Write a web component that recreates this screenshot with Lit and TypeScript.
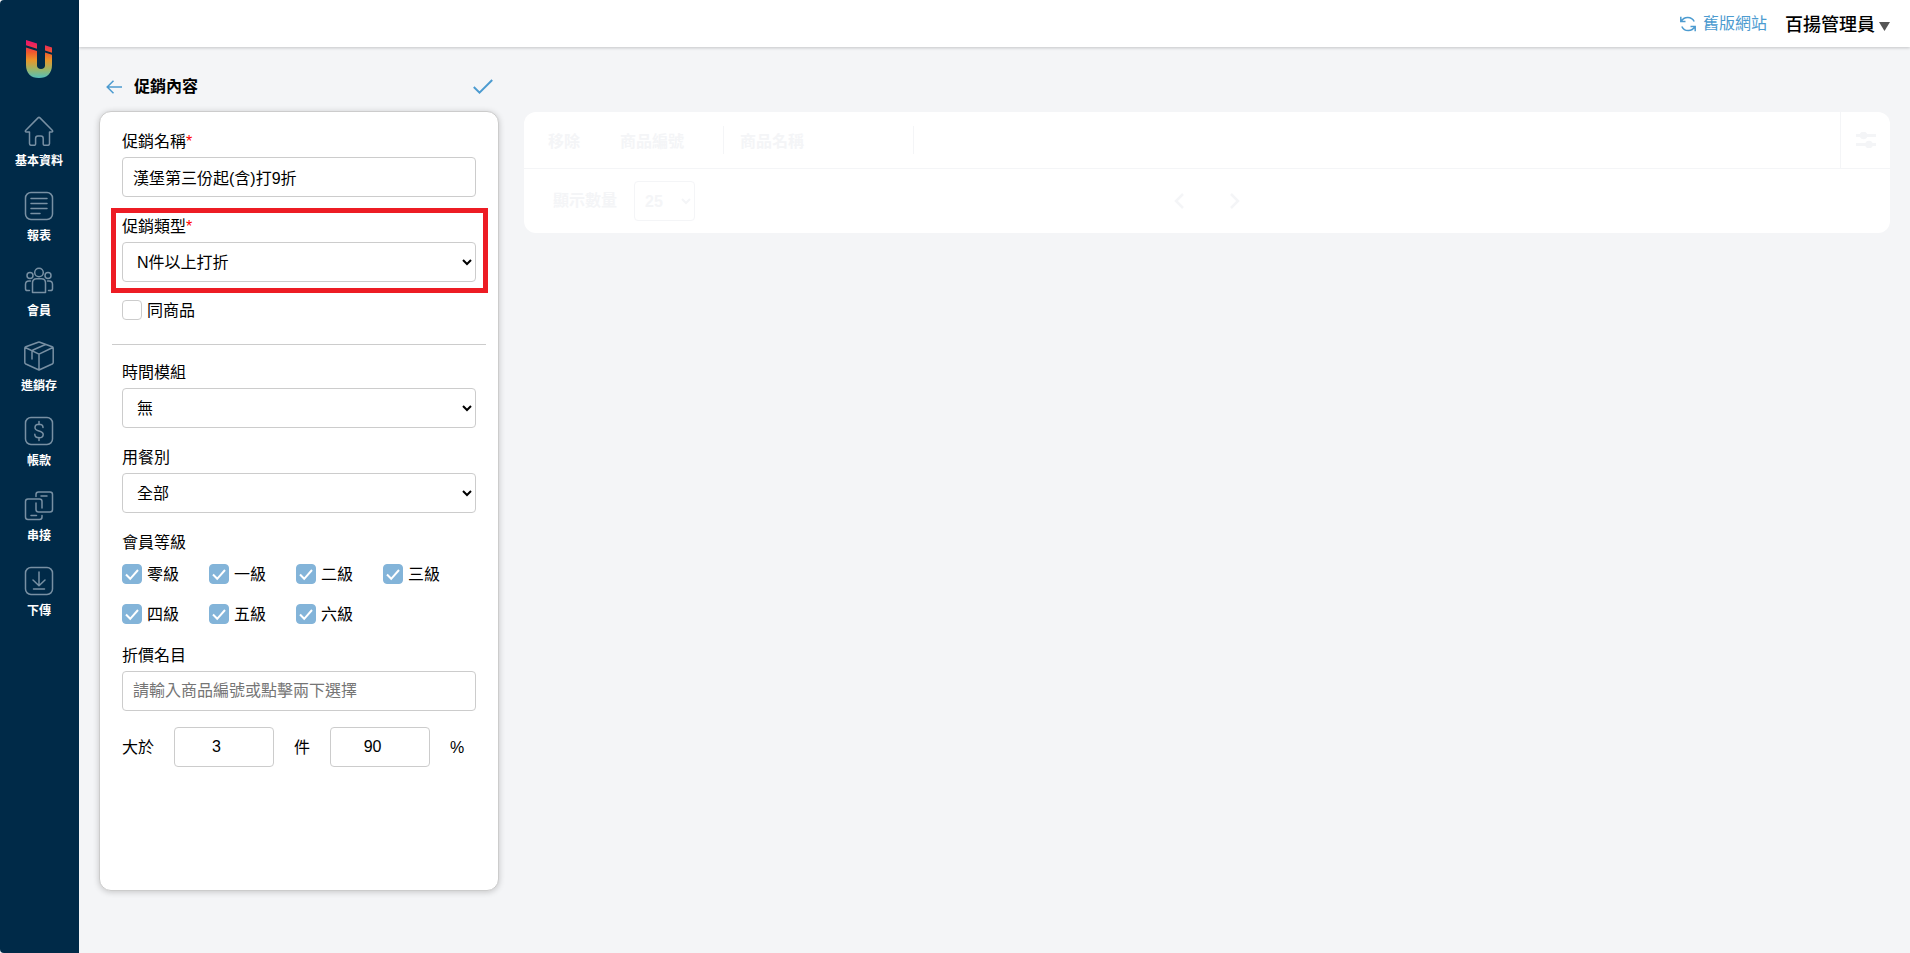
import { LitElement, html, css, svg } from "lit";
import { customElement } from "lit/decorators.js";

const shared = css`
  *, *::before, *::after { box-sizing: border-box; }
  button, input, select { font: inherit; color: inherit; }
  button { border: 0; padding: 0; background: none; cursor: pointer; display: flex; align-items: center; }
`;

const navItems = [
  { label: "基本資料", icon: svg`<path d="M5.500 16H2.600c-1.400 0-1.600-1-.8-1.800L14 1.900c.6-.6 1.400-.6 2 0l12.200 12.300c.8.8.6 1.800-.8 1.800h-1.900v11.500c0 1.200-.6 1.800-1.800 1.800h-3.200c-.9 0-1.300-.5-1.300-1.300v-5.500c0-1.600-.8-2.400-2.200-2.400h-3.200c-1.400 0-2.200.8-2.200 2.400V28c0 .8-.4 1.300-1.300 1.300H7.300c-1.200 0-1.800-.6-1.800-1.800z"/>` },
  { label: "報表", icon: svg`<rect x="1.500" y="1.500" width="27" height="27" rx="5.500"/><path d="M7 7.500h16M7 12.500h16M7 17.500h16M7 22.500h9"/>` },
  { label: "會員", icon: svg`<circle cx="15" cy="6.500" r="4.300"/><circle cx="6" cy="9.500" r="3"/><circle cx="24" cy="9.500" r="3"/><path d="M8.500 26.500V17c0-2.800 1.400-4.200 4.200-4.200h4.600c2.800 0 4.200 1.400 4.200 4.200v9.500zM6.500 15H5c-2.300 0-3.500 1.200-3.500 3.500v4.200c0 1.200.6 1.800 1.800 1.800h2.200M23.500 15H25c2.300 0 3.500 1.200 3.500 3.500v4.200c0 1.200-.6 1.800-1.800 1.800h-2.200"/>` },
  { label: "進銷存", icon: svg`<path d="M14.200 1.200 1.800 5.700q-1 .4-1 1.500v14.300q0 1 1 1.500L15 29l13.200-6q1-.5 1-1.500V7.200q0-1.100-1-1.500L15.800 1.200q-.8-.3-1.600 0zM1.200 6.500 15 13.200l13.800-6.700M15 13.200V29M8 18v-7.500q0-1 1-1.500l12.500-5.500"/>` },
  { label: "帳款", icon: svg`<rect x="1.500" y="1.500" width="27" height="27" rx="5.500"/><path d="M15 5.500v3M15 21.500v3M19 11.500c0-2-1.700-3.200-4-3.200s-4 1.200-4 3.200 1.500 2.900 4 3.500 4.200 1.400 4.200 3.500-1.800 3.300-4.200 3.300-4.200-1.300-4.200-3.500"/>` },
  { label: "串接", icon: svg`<path d="M12 5.500v-2q0-2.500 2.500-2.500H26q2.500 0 2.500 2.500v15q0 2.500-2.500 2.500h-11.500q-2.500 0-2.500-2.500V12M17 5h6M18 17V10.500Q18 8 15.500 8H4Q1.500 8 1.500 10.500v15.500Q1.500 28.500 4 28.500h11.500q2.500 0 2.500-2.500v-1.500M7 24.500h5.500"/>` },
  { label: "下傳", icon: svg`<rect x="1.500" y="1.500" width="27" height="27" rx="5.500"/><path d="M15 6v13.500M9 14l6 5.700 6-5.700M9.500 23h11"/>` },
];

@customElement("side-nav")
class SideNav extends LitElement {
  static styles = [shared, css`
    :host { display: block; background: #002a48; color: #fff; padding-right: 1px; }
    .logo { display: flex; justify-content: center; padding: 40px 0 37px; }
    nav { display: flex; flex-direction: column; }
    a { height: 75px; display: flex; flex-direction: column; align-items: center; gap: 6px; color: inherit; text-decoration: none; font-size: 12px; line-height: 18px; font-weight: 700; }
    .icon { fill: none; stroke: #7890a3; stroke-width: 1.500; stroke-linecap: round; stroke-linejoin: round; }
  `];
  render() {
    return html`
      <div class="logo">
        <svg width="26" height="39" viewBox="0 0 26 39" aria-hidden="true">
          <defs><linearGradient id="g" x1="0" y1="0" x2="0" y2="39" gradientUnits="userSpaceOnUse">
            <stop offset=".08" stop-color="#ec1c64"/><stop offset=".32" stop-color="#ee5a2d"/>
            <stop offset=".52" stop-color="#e8962a"/><stop offset=".75" stop-color="#9cb567"/><stop offset="1" stop-color="#4bbfc4"/>
          </linearGradient></defs>
          <path fill="url(#g)" d="M0 0l11 3.500v5.300L0 5.300zM19 5.200l7 2.200v5.300l-7-2.200zM0 7.500l11 3.500v14.500c0 2.300 1.500 3.500 4 3.500s4-1.200 4-3.500V12.600l7 2.200V25c0 8.500-5 13-13 13S0 33.500 0 25z"/>
        </svg>
      </div>
      <nav>
        ${navItems.map((n) => html`<a href="#"><svg class="icon" width="30" height="30" viewBox="0 0 30 30" aria-hidden="true">${n.icon}</svg><span>${n.label}</span></a>`)}
      </nav>`;
  }
}

@customElement("top-bar")
class TopBar extends LitElement {
  static styles = [shared, css`
    :host { display: flex; justify-content: flex-end; align-items: center; gap: 18px; height: 47px; padding: 0 20px; background: #fff; box-shadow: 0 1px 3px rgba(0, 0, 0, .2); }
    a { display: flex; align-items: center; gap: 7px; color: #4c9bd0; text-decoration: none; font-size: 16px; line-height: 24px; }
    .user { gap: 4px; padding-top: 2px; font-size: 18px; line-height: 24px; font-weight: 500; color: #000; }
    .caret { margin-top: 4px; }
  `];
  render() {
    return html`
      <a href="#">
        <svg width="16" height="16" viewBox="0 0 16 16" fill="none" stroke="currentColor" stroke-width="1.500" aria-hidden="true">
          <path d="M.8.800v4.700h4.700M15.200 15.200v-4.700h-4.700M1.200 5.300C3.800.4 11.500-.2 14.200 5.500M14.800 10.700C12.200 15.600 4.500 16.200 1.800 10.500"/>
        </svg>舊版網站</a>
      <button class="user" type="button">百揚管理員
        <svg class="caret" width="11" height="9" viewBox="0 0 11 9" aria-hidden="true"><path d="M0 0h11L5.500 9z" fill="#555"/></svg>
      </button>`;
  }
}

@customElement("promo-form")
class PromoForm extends LitElement {
  static styles = [shared, css`
    :host { display: flex; flex-direction: column; width: 400px; font-size: 16px; line-height: 27px; }
    .head { display: flex; align-items: center; height: 49px; padding: 0 6px 0 7px; }
    h1 { flex: 1; margin: 0 0 0 12px; font-size: 16px; font-weight: 700; }
    .head button { color: #4c9bd0; }
    form { flex: 1; padding: 16px 22px; background: #fff; border: 1px solid #ccc; border-radius: 12px; box-shadow: 0 1px 6px rgba(0, 0, 0, .2); display: flex; flex-direction: column; gap: 16px; }
    .field { display: flex; flex-direction: column; gap: 2px; position: relative; }
    .marked::after { content: ""; position: absolute; inset: -5px -12px -11px -11px; border: 5px solid #ed1c24; pointer-events: none; }
    .req { color: #f00; }
    .box { width: 100%; height: 40px; border: 1px solid #ccc; border-radius: 4px; background: #fff; padding: 0 10px; outline: 0; }
    .box::placeholder { color: #757575; }
    .num { width: 100px; text-align: center; }
    .check { display: flex; align-items: center; gap: 5px; line-height: 26px; }
    .check input { appearance: none; width: 20px; height: 20px; margin: 0 0 2px; border: 1px solid #ccc; border-radius: 4px; background: #fff; }
    .check input:checked { border-color: #83b4d9; background: #83b4d9 url("data:image/svg+xml,%3Csvg xmlns='http://www.w3.org/2000/svg' viewBox='0 0 20 20'%3E%3Cpath d='M4 10.500l4.200 4.300L16 6' fill='none' stroke='white' stroke-width='2'/%3E%3C/svg%3E") center / 20px 20px; }
    hr { width: calc(100% + 20px); margin: 4px -10px -2px; border: 0; border-top: 1px solid #ccc; }
    fieldset { border: 0; margin: 0 0 -2px; padding: 0; min-width: 0; }
    legend { padding: 0; margin-bottom: 6px; }
    .levels { display: grid; grid-template-columns: repeat(4, 87px); row-gap: 14px; }
    .rule { display: flex; align-items: center; gap: 20px; }
  `];
  render() {
    const levels = ["零級", "一級", "二級", "三級", "四級", "五級", "六級"];
    return html`
      <div class="head">
        <button type="button" aria-label="返回"><svg width="16" height="14" viewBox="0 0 16 14" fill="none" stroke="currentColor" stroke-width="1.500"><path d="M7.500.8L1.200 7l6.300 6.200M1.200 7H16"/></svg></button>
        <h1>促銷內容</h1>
        <button type="button" aria-label="儲存"><svg width="20" height="16" viewBox="0 0 20 16" fill="none" stroke="currentColor" stroke-width="2"><path d="M.8 8l5.700 5.700L19.200 1"/></svg></button>
      </div>
      <form>
        <div class="field"><label for="name">促銷名稱<span class="req">*</span></label><input class="box" id="name" type="text" value="漢堡第三份起(含)打9折" /></div>
        <div class="field marked"><label for="type">促銷類型<span class="req">*</span></label><select class="box" id="type"><option>N件以上打折</option></select></div>
        <label class="check"><input type="checkbox" />同商品</label>
        <hr />
        <div class="field"><label for="time">時間模組</label><select class="box" id="time"><option>無</option></select></div>
        <div class="field"><label for="dining">用餐別</label><select class="box" id="dining"><option>全部</option></select></div>
        <fieldset><legend>會員等級</legend>
          <div class="levels">${levels.map((l) => html`<label class="check"><input type="checkbox" checked />${l}</label>`)}</div>
        </fieldset>
        <div class="field"><label for="item">折價名目</label><input class="box" id="item" type="text" placeholder="請輸入商品編號或點擊兩下選擇" /></div>
        <div class="rule">
          <label for="qty">大於</label><input class="box num" id="qty" type="number" value="3" />
          <label for="pct">件</label><input class="box num" id="pct" type="number" value="90" /><span>%</span>
        </div>
      </form>`;
  }
}

@customElement("product-list")
class ProductList extends LitElement {
  static styles = [shared, css`
    :host { display: block; background: #fff; border-radius: 12px; color: #f4f5f7; font-size: 16px; line-height: 24px; font-weight: 700; }
    table { width: 100%; border-collapse: separate; border-spacing: 0; table-layout: fixed; }
    th { height: 57px; padding: 0; text-align: left; border-bottom: 1px solid #f4f5f7; }
    .remove { width: 80px; padding-left: 24px; }
    .code { width: 120px; padding-left: 16px; }
    .title { width: 190px; padding-left: 16px; }
    .cell { display: block; height: 28px; line-height: 32px; }
    .bar { border-right: 1px solid #f4f5f7; }
    .tools { width: 50px; border-left: 1px solid #f4f5f7; }
    .tools button { margin: 0 auto; }
    .foot { display: grid; grid-template-columns: 1fr auto 1fr; align-items: center; height: 64px; padding: 0 29px; }
    .size { display: flex; align-items: center; gap: 17px; }
    select { width: 61px; height: 40px; padding: 0 6px; border: 1px solid #f4f5f7; border-radius: 4px; background: #fff; }
    .pager { display: flex; gap: 46px; }
  `];
  render() {
    const arrow = (d: string) => html`<svg width="10" height="16" viewBox="0 0 10 16" fill="none" stroke="currentColor" stroke-width="2.500"><path d=${d}/></svg>`;
    return html`
      <table><thead><tr>
        <th class="remove"><span class="cell">移除</span></th>
        <th class="code"><span class="cell bar">商品編號</span></th>
        <th class="title"><span class="cell bar">商品名稱</span></th>
        <th></th>
        <th class="tools"><button type="button" aria-label="欄位設定"><svg width="20" height="16" viewBox="0 0 20 16" fill="none" stroke="currentColor" stroke-width="3"><path d="M0 3.500h20M0 12.500h20"/><circle cx="7.500" cy="3.500" r="2.300"/><circle cx="13" cy="12.500" r="2.300"/></svg></button></th>
      </tr></thead></table>
      <div class="foot">
        <div class="size"><label for="size">顯示數量</label><select id="size"><option>25</option></select></div>
        <div class="pager">
          <button type="button" aria-label="上一頁">${arrow("M9 1L2 8l7 7")}</button>
          <button type="button" aria-label="下一頁">${arrow("M1 1l7 7-7 7")}</button>
        </div>
      </div>`;
  }
}

@customElement("app-root")
class AppRoot extends LitElement {
  static styles = [shared, css`
    :host { display: grid; grid-template-columns: 79px 1fr; min-height: 100vh; background: #f4f5f7; color: #000; font-family: "Liberation Sans", "Noto Sans CJK TC", sans-serif; }
    side-nav { border-radius: 4px 0 0 4px; }
    .page { display: flex; flex-direction: column; min-width: 0; }
    main { flex: 1; display: flex; gap: 25px; padding: 15px 20px 62px; }
    product-list { flex: 1; align-self: flex-start; margin-top: 50px; }
  `];
  render() {
    return html`<side-nav></side-nav>
      <div class="page"><top-bar></top-bar>
        <main><promo-form></promo-form><product-list></product-list></main>
      </div>`;
  }
}
